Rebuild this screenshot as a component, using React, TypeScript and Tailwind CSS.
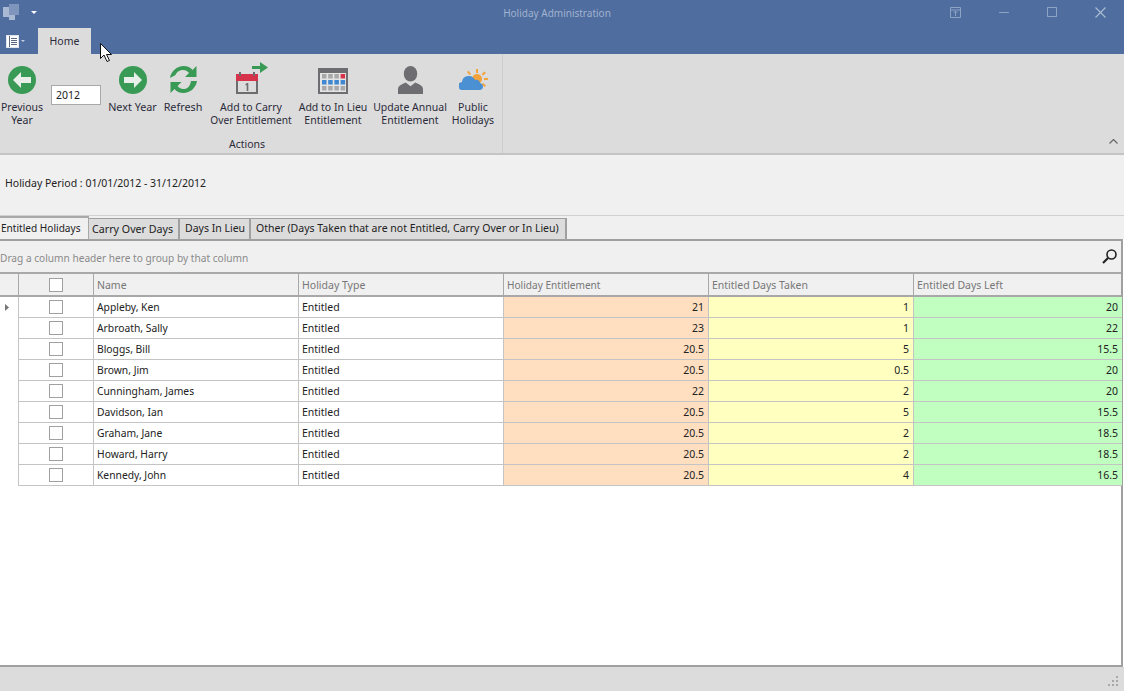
import React from "react";

const font = { fontFamily: '"Noto Sans", Tahoma, sans-serif' };

const rows: [string, string, string, string][] = [
  ["Appleby, Ken", "21", "1", "20"],
  ["Arbroath, Sally", "23", "1", "22"],
  ["Bloggs, Bill", "20.5", "5", "15.5"],
  ["Brown, Jim", "20.5", "0.5", "20"],
  ["Cunningham, James", "22", "2", "20"],
  ["Davidson, Ian", "20.5", "5", "15.5"],
  ["Graham, Jane", "20.5", "2", "18.5"],
  ["Howard, Harry", "20.5", "2", "18.5"],
  ["Kennedy, John", "20.5", "4", "16.5"],
];

const cols = "grid grid-cols-[19px_75px_205px_205px_205px_205px_208px]";

function BigArrow({ dir }: { dir: "left" | "right" }) {
  return (
    <svg width="28" height="28" viewBox="0 0 28 28">
      <circle cx="14" cy="14" r="14" fill="#389a54" />
      <path
        d={dir === "left" ? "M5 14l8-8v5h10v6H13v5z" : "M23 14l-8-8v5H5v6h10v5z"}
        fill="#e8eee8"
      />
    </svg>
  );
}

function Refresh() {
  return (
    <svg width="29" height="29" viewBox="0 0 29 29" fill="#389a54">
      <path d="M1 13C2 6 8 1 14.500 1c4 0 7 1.500 9 4l4-4v11H16l4-4c-1.500-2-3.500-3-6-3-4 0-6.500 2.500-7.500 5z" />
      <path d="M28 16c-1 7-7 12-13.500 12-4 0-7-1.500-9-4l-4 4V17h11l-4 4c1.500 2 3.500 3 6 3 4 0 6.500-2.500 7.500-8z" />
    </svg>
  );
}

function CarryIcon() {
  return (
    <svg width="33" height="32" viewBox="0 0 33 32">
      <path d="M2 18h20v13H2z" fill="#dcdcdc" stroke="#6d6d70" strokeWidth="2" />
      <path d="M1 12h22v7H1z" fill="#d6324a" />
      <path d="M4 10h2v4H4zM18 10h2v4h-2z" fill="#6d6d70" />
      <path d="M10.500 22l1.500-1h1.300v8h-1.600v-6l-1.200.6z" fill="#6d6d70" />
      <path d="M17 4h8V0l8 5.500-8 5.500V7h-8z" fill="#389a54" />
    </svg>
  );
}

function GridCal() {
  const c = [
    ["#a8a8a8", "#a8a8a8", "#a8a8a8", "#d6324a"],
    ["#3f87d0", "#3f87d0", "#3f87d0", "#3f87d0"],
    ["#a8a8a8", "#a8a8a8", "#a8a8a8", "#a8a8a8"],
  ];
  return (
    <svg width="30" height="26" viewBox="0 0 30 26">
      <rect width="30" height="26" fill="#6d6d72" />
      <rect x="2" y="5" width="26" height="19" fill="#e4e4e4" />
      {c.map((r, y) =>
        r.map((f, x) => (
          <rect key={`${x}-${y}`} x={4 + x * 6.2} y={6 + y * 6} width="4.500" height="4.500" fill={f} />
        )),
      )}
    </svg>
  );
}

function Person() {
  return (
    <svg width="25" height="28" viewBox="0 0 26 29" fill="#6d6d72">
      <ellipse cx="13" cy="8" rx="7" ry="8" />
      <path d="M0 29v-5c0-4 4-5 8-7l5 4 5-4c4 2 8 3 8 7v5z" />
    </svg>
  );
}

function Weather() {
  return (
    <svg width="29" height="21" viewBox="0 0 29 21" className="mb-[4px]">
      <path d="M17 0h2v4h-2zM25 9h4v2h-4zM8 3l1.500-1.300 2.500 3L10.500 6zM25.500 2.500L27 4l-3 2.500-1.300-1.500zM24 14l3 2.500-1.300 1.500-3-2.500z" fill="#f3a33b" />
      <circle cx="18" cy="10" r="5" fill="#f3a33b" />
      <path d="M4 21a4 4 0 0 1-1-8c.5-4 3-6 7-6 3 0 5 2 6 4 3-1 5 1 5 3 2 .5 3 2 3 3.500 0 2-1 3.500-4 3.500z" fill="#4a90d2" />
    </svg>
  );
}

function RibbonButton({
  icon,
  label,
  className,
}: {
  icon: React.ReactNode;
  label: React.ReactNode;
  className: string;
}) {
  return (
    <div className={`flex flex-col items-center ${className}`}>
      <div className="h-[34px] flex items-end justify-center">{icon}</div>
      <div className="mt-[7px] text-center leading-[13px] text-[#2b2b3a] whitespace-nowrap">{label}</div>
    </div>
  );
}

export default function App() {
  return (
    <div className="w-[1124px] h-[691px] overflow-hidden flex flex-col bg-white text-[10.5px] text-[#222]" style={font}>
      {/* Title bar */}
      <div className="h-[28px] shrink-0 bg-[#4f6d9e] grid grid-cols-[170px_1fr_180px] items-center">
        <div className="flex items-center">
          <svg width="17" height="17" viewBox="0 0 17 17" className="ml-[3px] mb-[4px]">
            <path d="M0 3h6v10H0z" fill="#a9b9d3" />
            <path d="M6 0h10v11H6z" fill="#7f95bb" />
            <path d="M6 11h6v5H6z" fill="#a9b9d3" />
          </svg>
          <svg width="6" height="3" viewBox="0 0 6 3" className="ml-[11px] mb-[4px]" fill="#fff">
            <path d="M0 0h6L3 3z" />
          </svg>
        </div>
        <div className="text-center text-[10px] text-[#a0b2cf] mb-[2px]">Holiday Administration</div>
        <div className="flex items-center justify-end mb-[4px]">
          <svg width="11" height="11" viewBox="0 0 11 11" className="mr-[38px]" fill="none" stroke="#8ea2c4">
            <path d="M.5.500h10v10H.5zM.5 3h10M5.500 9V4.500M3.500 5h4" />
          </svg>
          <div className="w-[10px] h-px bg-[#8ea2c4] mr-[38px]" />
          <div className="w-[10px] h-[10px] border border-[#8ea2c4] mr-[38px]" />
          <svg width="11" height="11" viewBox="0 0 11 11" className="mr-[18px]" stroke="#a9bad4" strokeWidth="1.200">
            <path d="M.5.500l10 10M10.500.500l-10 10" />
          </svg>
        </div>
      </div>

      {/* Ribbon tabs */}
      <div className="h-[26px] shrink-0 bg-[#4f6d9e] flex relative z-20">
        <div className="w-[38px] flex items-center pl-[6px] gap-[2px]">
          <svg width="13" height="13" viewBox="0 0 13 13">
            <rect x=".5" y=".5" width="12" height="12" fill="#fff" stroke="#dfe4ec" />
            <path d="M3.500 1v11M5 3.500h6M5 5.500h6M5 7.500h6M5 9.500h6" stroke="#5b6a80" />
          </svg>
          <svg width="4" height="2" viewBox="0 0 4 2" fill="#c4cfe0">
            <path d="M0 0h4L2 2z" />
          </svg>
        </div>
        <div className="w-[53px] bg-[#dcdcdc] flex items-center justify-center pt-[2px] text-[#2b2b3a]">Home</div>
        <svg width="13" height="20" viewBox="0 0 13 20" className="absolute left-[100px] top-[15px]">
          <path d="M.5.500v15l3.500-3.500 3 6.500 2.500-1-3-6h5z" fill="#fff" stroke="#111" />
        </svg>
      </div>

      {/* Ribbon */}
      <div className="h-[99px] shrink-0 bg-[#dcdcdc] flex relative">
        <div className="w-[503px] shrink-0 border-r border-[#cdcdcd] flex flex-col">
          <div className="flex h-[80px] shrink-0 pt-[6px] relative">
            <RibbonButton className="w-[44px]" icon={<BigArrow dir="left" />} label={<>Previous<br />Year</>} />
            <div className="w-[50px] h-[20px] mt-[25px] ml-[7px] bg-white border border-[#a8a8a8] px-[4px] leading-[18px]">2012</div>
            <RibbonButton className="w-[53px] ml-[5px]" icon={<BigArrow dir="right" />} label={<span className="block mt-[-1px] text-[10.8px]">Next Year</span>} />
            <RibbonButton className="w-[48px]" icon={<Refresh />} label={<span className="block mt-[-1px] text-[10.8px]">Refresh</span>} />
            <RibbonButton className="w-[88px]" icon={<CarryIcon />} label={<>Add to Carry<br /><span className="text-[10.2px]">Over Entitlement</span></>} />
            <RibbonButton className="w-[76px]" icon={<GridCal />} label={<>Add to In Lieu<br />Entitlement</>} />
            <RibbonButton className="w-[78px]" icon={<Person />} label={<>Update Annual<br />Entitlement</>} />
            <RibbonButton className="w-[48px]" icon={<Weather />} label={<>Public<br />Holidays</>} />
          </div>
          <div className="text-center text-[#2b2b3a] mt-[3px] ml-[-8px]">Actions</div>
        </div>
        <svg width="9" height="5" viewBox="0 0 9 5" className="absolute right-[6px] bottom-[9px]" fill="none" stroke="#666" strokeWidth="1.200">
          <path d="M.5 4.500l4-4 4 4" />
        </svg>
      </div>

      {/* Period panel */}
      <div className="h-[63px] shrink-0 bg-[#f0f0f0] border-t-2 border-[#c4c4c4] border-b border-b-[#d0d0d0] pl-[5px] pt-[21px] text-[#222]">
        Holiday Period : 01/01/2012 - 31/12/2012
      </div>

      {/* Tabs */}
      <div className="h-[23px] shrink-0 bg-[#f0f0f0] flex items-end whitespace-nowrap">
        <div className="w-[89px] h-[23px] bg-[#f0f0f0] border-t-2 border-r border-[#a8a8a8] pl-[1px] pt-[3px] text-[10.1px]">Entitled Holidays</div>
        <div className="w-[91px] h-[21px] bg-[#dcdcdc] border-t border-r-2 border-[#a0a0a0] pl-[3px] pt-[2px] text-[10.7px]">Carry Over Days</div>
        <div className="w-[71px] h-[21px] bg-[#dcdcdc] border-t border-r-2 border-[#a0a0a0] pl-[5px] pt-[2px]">Days In Lieu</div>
        <div className="w-[316px] h-[21px] bg-[#dcdcdc] border-t border-r-2 border-[#a0a0a0] pl-[5px] pt-[2px]">Other (Days Taken that are not Entitled, Carry Over or In Lieu)</div>
      </div>

      {/* Grid container */}
      <div className="flex-1 min-h-0 flex flex-col border-t-2 border-b-2 border-r-2 border-[#a0a0a0] bg-white mr-[1px]">
        <div className="h-[33px] shrink-0 bg-[#f0f0f0] flex items-center justify-between border-b-2 border-[#a8a8a8] pr-[4px]">
          <span className="text-[#8a8a8a] text-[10.15px] pt-[4px]">Drag a column header here to group by that column</span>
          <svg width="15" height="15" viewBox="0 0 15 15" fill="none" stroke="#222" strokeWidth="1.600">
            <circle cx="9.500" cy="5.500" r="4.500" />
            <path d="M6 9l-5 5" strokeWidth="2.200" />
          </svg>
        </div>

        <div className={`${cols} h-[23px] shrink-0 bg-[#f0f0f0] border-b-2 border-[#a8a8a8] text-[#777]`}>
          <div className="border-r border-[#a8a8a8]" />
          <div className="border-r border-[#a8a8a8] flex items-center justify-center">
            <div className="w-[14px] h-[14px] bg-white border border-[#a0a0a0]" />
          </div>
          <div className="flex items-center pl-[3px] pt-[2px] border-r border-[#a8a8a8]">Name</div>
          <div className="flex items-center pl-[3px] pt-[2px] border-r border-[#a8a8a8]">Holiday Type</div>
          <div className="flex items-center pl-[3px] pt-[2px] border-r border-[#a8a8a8] text-[10.1px]">Holiday Entitlement</div>
          <div className="flex items-center pl-[3px] pt-[2px] border-r border-[#a8a8a8]">Entitled Days Taken</div>
          <div className="flex items-center pl-[3px] pt-[2px]">Entitled Days Left</div>
        </div>

        {rows.map((r, i) => (
          <div key={r[0]} className={`${cols} h-[21px] shrink-0 text-[#222]`}>
            <div className="border-r border-[#c4c4c4] bg-white flex items-center pl-[5px]">
              {i === 0 && (
                <svg width="4" height="7" viewBox="0 0 4 7" fill="#777">
                  <path d="M0 0l4 3.500L0 7z" />
                </svg>
              )}
            </div>
            <div className="border-r border-b border-[#c4c4c4] flex items-center justify-center">
              <div className="w-[14px] h-[14px] bg-white border border-[#a0a0a0]" />
            </div>
            <div className="border-r border-b border-[#c4c4c4] flex items-center pl-[3px] pt-[2px] text-[10.3px]">{r[0]}</div>
            <div className="border-r border-b border-[#c4c4c4] flex items-center pl-[3px] pt-[2px]">Entitled</div>
            <div className="border-r border-b border-[#c4c4c4] bg-[#ffdfc0] flex items-center justify-end pr-[4px] pt-[2px]">{r[1]}</div>
            <div className="border-r border-b border-[#c4c4c4] bg-[#ffffc0] flex items-center justify-end pr-[4px] pt-[2px]">{r[2]}</div>
            <div className="border-b border-[#c4c4c4] bg-[#c0ffc0] flex items-center justify-end pr-[4px] pt-[2px]">{r[3]}</div>
          </div>
        ))}
      </div>

      {/* Status bar */}
      <div className="h-[24px] shrink-0 bg-[#dcdcdc] flex items-end justify-end pr-[5px] pb-[4px]">
        <svg width="11" height="11" viewBox="0 0 11 11" fill="#a8a8a8">
          <path d="M8 0h2v2H8zM4 4h2v2H4zM8 4h2v2H8zM0 8h2v2H0zM4 8h2v2H4zM8 8h2v2H8z" />
        </svg>
      </div>
    </div>
  );
}
